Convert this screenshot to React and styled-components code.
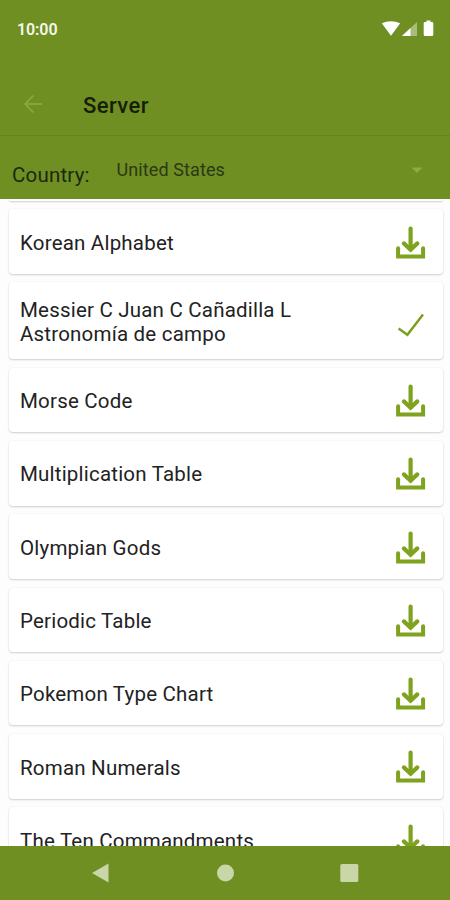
import React from "react";
import styled, { createGlobalStyle } from "styled-components";

const GlobalStyle = createGlobalStyle`
  * {
    box-sizing: border-box;
  }

  body {
    margin: 0;
    background: #fff;
    font-family: Roboto, "Liberation Sans", sans-serif;
  }
`;

const Screen = styled.div`
  width: 450px;
  height: 900px;
  display: flex;
  flex-direction: column;
  overflow: hidden;
  background: #fdfdfd;
`;

const Header = styled.header`
  flex: none;
  height: 199px;
  background: #6f8f23;
  color: #17200a;
`;

const StatusBar = styled.div`
  height: 74px;
  padding: 20px 15px 0 17px;
  display: flex;
  align-items: flex-start;
  justify-content: space-between;
`;

const Clock = styled.span`
  color: #f4f8ea;
  font-size: 16px;
  font-weight: 600;
  line-height: 20px;
  letter-spacing: -0.1px;
`;

const StatusIcons = styled.svg`
  display: block;
  width: 54px;
  height: 18px;
`;

const Toolbar = styled.div`
  height: 62px;
  padding-left: 23px;
  display: flex;
  align-items: center;
  border-bottom: 1px solid #66851f;
`;

const BackIcon = styled.svg`
  width: 20px;
  height: 20px;
  margin: -2px 40px 0 0;
`;

const Title = styled.h1`
  margin: 0;
  padding-top: 2px;
  font-size: 22px;
  font-weight: 500;
  line-height: 28px;
  letter-spacing: 0.4px;
  color: #161e09;
`;

const CountryRow = styled.div`
  height: 63px;
  padding: 0 27px 0 12px;
  display: flex;
  align-items: center;
`;

const CountryLabel = styled.span`
  width: 104.5px;
  padding-top: 14px;
  font-size: 20.5px;
  line-height: 24px;
  letter-spacing: 0.2px;
  color: #1d2810;
`;

const CountryValue = styled.span`
  flex: 1;
  padding-top: 5px;
  font-size: 18px;
  line-height: 22px;
  letter-spacing: 0.1px;
  color: #2b3915;
`;

const Caret = styled.svg`
  width: 12px;
  height: 6px;
  margin-top: 4px;
`;

const List = styled.main`
  flex: 1;
  min-height: 0;
  padding: 0 7px 0 9px;
  display: flex;
  flex-direction: column;
  gap: 8.6px;
  overflow: hidden;
`;

const Card = styled.div`
  flex: none;
  height: ${({ $tall }) => ($tall ? "76.6px" : "64.7px")};
  padding: 0 17.5px 0 11px;
  display: flex;
  align-items: center;
  justify-content: space-between;
  background: #fff;
  border-radius: 4px;
  box-shadow: 0 1px 2px rgba(0, 0, 0, 0.18), 0 0 2px rgba(0, 0, 0, 0.06);
`;

const CardEdge = styled(Card)`
  height: 1.6px;
  border-radius: 0 0 4px 4px;
`;

const CardTitle = styled.span`
  max-width: 300px;
  padding-top: 2.8px;
  font-size: 20.5px;
  line-height: 24.5px;
  letter-spacing: 0.2px;
  white-space: pre-line;
  color: #222;
`;

const ActionIcon = styled.svg`
  flex: none;
  width: 30px;
  height: 34px;
`;

const NavBar = styled.nav`
  flex: none;
  height: 54px;
  padding: 0 91px;
  display: flex;
  align-items: center;
  justify-content: space-between;
  background: #6f8f23;
`;

const NavIcon = styled.svg`
  width: 20px;
  height: 20px;
  fill: #c8d6a8;
`;

const decks = [
  { title: "Korean Alphabet" },
  { title: "Messier C Juan C Cañadilla L\nAstronomía de campo", done: true },
  { title: "Morse Code" },
  { title: "Multiplication Table" },
  { title: "Olympian Gods" },
  { title: "Periodic Table" },
  { title: "Pokemon Type Chart" },
  { title: "Roman Numerals" },
  { title: "The Ten Commandments" },
];

const DownloadIcon = () => (
  <ActionIcon viewBox="0 0 30 34" fill="none" stroke="#7fa21f" strokeWidth="4">
    <path d="M14.6 3.6V24.4" strokeWidth="4.2" strokeLinecap="round" />
    <path d="M7.9 18.4l6.7 6.3 6.7-6.3" strokeWidth="4.2" strokeLinecap="round" />
    <path d="M2.1 23.4V31.4H27.1V23.4" />
    <path d="M2.1 23.2V24M27.1 23.2V24" strokeLinecap="round" />
  </ActionIcon>
);

const CheckIcon = () => (
  <ActionIcon viewBox="0 0 30 34" fill="none" stroke="#7c9f1d" strokeWidth="2.5">
    <path d="M2.6 24.6l8.8 6.2L27 10.6" />
  </ActionIcon>
);

const App = () => {
  return (
    <Screen>
      <GlobalStyle />
      <Header>
        <StatusBar>
          <Clock>10:00</Clock>
          <StatusIcons viewBox="0 0 54 18" fill="#fff">
            <path d="M.8 3.3Q10 -.8 19.2 3.3L10 15.8Z" />
            <path d="M21 16L36 2V16Z" opacity=".4" />
            <path d="M21 16L29.5 8V16Z" />
            <path d="M45.5 2V.5h4V2H51q1.3 0 1.3 1.3V14.7q0 1.3-1.3 1.3h-7q-1.3 0-1.3-1.3V3.3Q42.7 2 44 2Z" />
          </StatusIcons>
        </StatusBar>
        <Toolbar>
          <BackIcon viewBox="0 0 20 20" fill="none" stroke="#86a637" strokeWidth="1.8">
            <path d="M19 10H2.5M10.5 1.5L2 10l8.5 8.5" />
          </BackIcon>
          <Title>Server</Title>
        </Toolbar>
        <CountryRow>
          <CountryLabel>Country:</CountryLabel>
          <CountryValue>United States</CountryValue>
          <Caret viewBox="0 0 12 6" fill="#8dac3c">
            <path d="M.5 .5h11L6 6Z" />
          </Caret>
        </CountryRow>
      </Header>
      <List>
        <CardEdge />
        {decks.map(({ title, done }) => (
          <Card key={title} $tall={done}>
            <CardTitle>{title}</CardTitle>
            {done ? <CheckIcon /> : <DownloadIcon />}
          </Card>
        ))}
      </List>
      <NavBar>
        <NavIcon viewBox="0 0 20 20">
          <path d="M1 10L17.5 .5V19.5Z" />
        </NavIcon>
        <NavIcon viewBox="0 0 20 20">
          <circle cx="10.5" cy="10" r="8.5" />
        </NavIcon>
        <NavIcon viewBox="0 0 20 20">
          <rect x="1.3" y="1" width="18" height="18" rx="1.5" />
        </NavIcon>
      </NavBar>
    </Screen>
  );
};

export default App;
